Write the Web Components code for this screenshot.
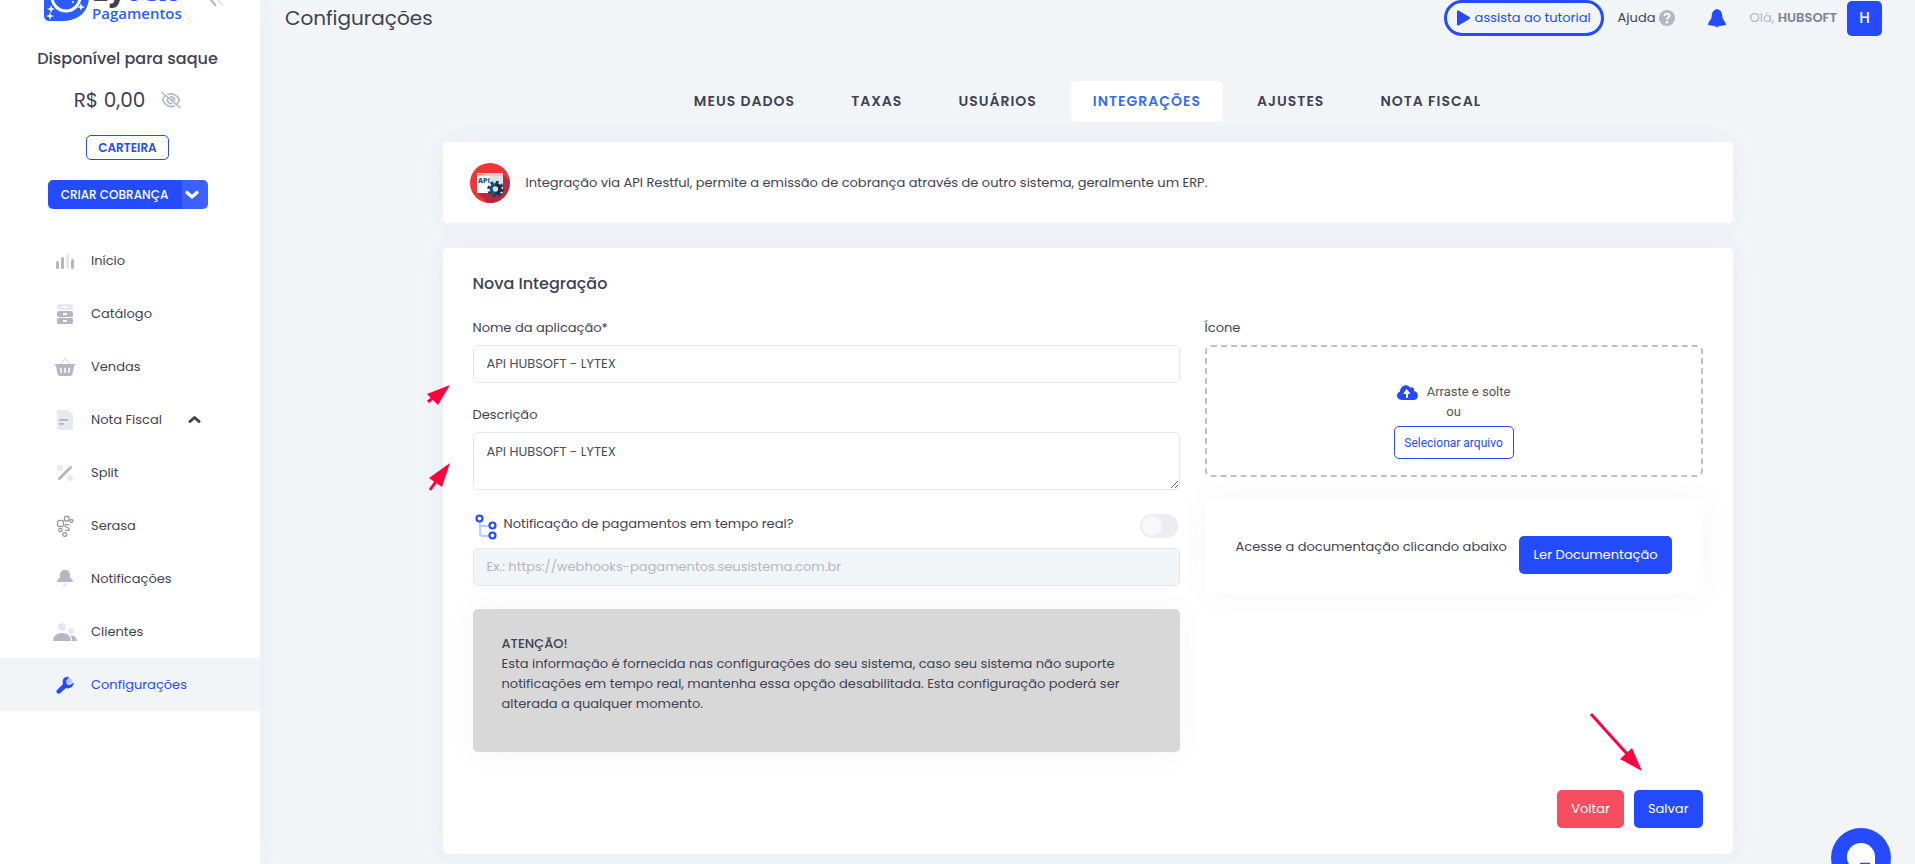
<!DOCTYPE html>
<html lang="pt-BR">
<head>
<meta charset="utf-8">
<meta name="viewport" content="width=device-width, initial-scale=1">
<title>Configurações</title>
<style>
  :root {
    --blue: #244bff;
    --ink: #3f4254;
    --muted: #b5b5c3;
    --soft: #e8e8ef;
    --page: #f1f5f8;
    --line: #e4e6ef;
    --shadow: 0 0 30px rgba(82, 63, 105, .05);
  }
  html, body { margin: 0; min-height: 100%; }
  body {
    background: var(--page);
    color: var(--ink);
    font: 400 13px/20px Poppins, Inter, sans-serif;
  }
</style>
</head>
<body>
<app-shell></app-shell>

<script>
const define = (name, html, setup) => {
  const template = document.createElement('template');
  template.innerHTML = `<style>
    *, *::before, *::after { box-sizing: border-box; }
    :host { display: block; box-sizing: border-box; }
    button, input, textarea { font: inherit; color: inherit; margin: 0; }
    button { cursor: pointer; }
    a { color: inherit; text-decoration: none; }
    svg { display: block; flex: none; }
  </style>` + html;
  customElements.define(name, class extends HTMLElement {
    constructor() {
      super();
      this.attachShadow({ mode: 'open' }).append(template.content.cloneNode(true));
    }
    connectedCallback() { if (setup) setup(this, this.shadowRoot); }
  });
};

define('ui-card', `
  <style>
    :host { background: #fff; border-radius: 5px; box-shadow: var(--shadow); }
  </style>
  <slot></slot>
`);

define('ui-button', `
  <style>
    :host { display: inline-block; }
    button {
      display: block; height: 38px; padding: 0 14px; border: 0; border-radius: 5px;
      background: var(--blue); color: #fff; white-space: nowrap;
    }
    :host([tone="danger"]) button { background: #f64e60; }
  </style>
  <button type="button"><slot></slot></button>
`);

define('nav-item', `
  <style>
    a { display: flex; align-items: center; height: 53px; padding-left: 50px; gap: 11px; }
    .icon { display: grid; place-items: center; width: 30px; }
    :host([active]) a { background: var(--page); color: var(--blue); }
    .end { margin-left: 15px; }
  </style>
  <a href="#"><span class="icon"><slot name="icon"></slot></span><slot></slot><span class="end"><slot name="end"></slot></span></a>
`);

define('app-sidebar', `
  <style>
    :host {
      width: 260px; background: #fff; flex: none; position: relative;
      box-shadow: 0 0 28px rgba(82, 63, 105, .05);
    }
    header { display: flex; flex-direction: column; align-items: center; padding-right: 5px; }
    .brand { height: 22px; margin-right: -5px; width: 260px; }
    .label { margin: 25px 0 0; font-size: 16px; line-height: 24px; font-weight: 500; }
    .balance { display: flex; align-items: center; gap: 16px; height: 30px; margin-top: 14px; font-size: 20px; }
    .balance button { padding: 0; border: 0; background: none; }
    .wallet {
      margin-top: 20px; width: 83px; height: 25px; padding: 0; border: 1px solid var(--blue);
      border-radius: 5px; background: #fff; color: var(--blue); font-size: 12px; font-weight: 600;
    }
    .split { display: flex; margin-top: 20px; border-radius: 5px; overflow: hidden; }
    .split button { height: 29px; border: 0; padding: 0; color: #fff; background: var(--blue); font-weight: 500; font-size: 12px; }
    .split .main { width: 134px; }
    .split .more { width: 26px; background: #3a60ff; padding-left: 3px; }
    nav { margin-top: 25px; }
  </style>
  <header>
    <svg class="brand" viewBox="0 0 260 22" role="img" aria-label="LyTex Pagamentos">
      <path d="M44-24h45V-4C89 12 78 21 62 21H50q-6 0-6-6z" fill="#2a5cff"/>
      <circle cx="66" cy="-3" r="14" fill="none" stroke="#fff" stroke-width="3"/>
      <path d="M50 12l1 3 3 1-3 1-1 3-1-3-3-1 3-1zM51 5l1 3 3 1-3 1-1 3-1-3-3-1 3-1zM81 3l1 3 3 1-3 1-1 3-1-3-3-1 3-1z" fill="#fff"/>
      <circle cx="73" cy="2" r="1" fill="#fff"/>
      <text x="92" y="1" font-family="Open Sans, sans-serif" font-size="28" font-weight="800" fill="#3f4254">Ly<tspan fill="#2a5cff">Tex</tspan></text>
      <text x="92" y="19" font-family="Open Sans, sans-serif" font-size="15" font-weight="600" fill="#2a5cff">Pagamentos</text>
      <path d="M207-5l9 11" stroke="#b5b5c3" stroke-width="2"/><path d="M214-5l9 11" stroke="#e4e4ea" stroke-width="2"/>
    </svg>
    <p class="label">Disponível para saque</p>
    <div class="balance"><span>R$ 0,00</span>
      <button type="button" aria-label="Ocultar saldo">
        <svg width="20" height="18" viewBox="0 0 20 18" fill="none" stroke="#b5b5c3" stroke-width="1.6" stroke-linecap="round">
          <path d="M4 5C2 7 1.5 9 2 9.800C4 14 8 16 11 15.600Q12.500 15.600 13.500 15M7 3.500C12 1.500 17 5 18.500 9Q18 11 16 13M6.500 8C6 11 8.500 13 11 12.500M9 6.200C12 5 14 7.500 13.500 9.800M9.500 8.500Q11.500 7.500 11.500 10"/>
          <path d="M1 1.500l18 15"/>
        </svg>
      </button>
    </div>
    <button class="wallet" type="button">CARTEIRA</button>
    <div class="split">
      <button class="main" type="button">CRIAR COBRANÇA</button>
      <button class="more" type="button" aria-label="Mais opções">
        <svg width="14" height="10" viewBox="0 0 14 10" fill="none" stroke="#fff" stroke-width="3.200" stroke-linecap="round" stroke-linejoin="round"><path d="M2 2.500l5 4.500 5-4.500"/></svg>
      </button>
    </div>
  </header>
  <nav>
    <nav-item><svg slot="icon" width="18" height="16" viewBox="0 0 18 16"><g fill="#b5b5c3"><rect y="8" width="3" height="8" rx="1.500"/><rect x="5" y="4" width="3" height="12" rx="1.500"/><rect x="15" y="6" width="3" height="10" rx="1.500"/></g><rect x="10" width="3" height="16" rx="1.500" fill="#e8e8ef"/></svg>Início</nav-item>
    <nav-item><svg slot="icon" width="16" height="20" viewBox="0 0 16 20"><rect width="16" height="6" rx="1.500" fill="#e8e8ef"/><rect y="7" width="16" height="6" rx="1.500" fill="#b5b5c3"/><rect y="14" width="16" height="6" rx="1.500" fill="#b5b5c3"/><g fill="#fff"><rect x="6" y="2" width="4" height="2"/><rect x="6" y="9" width="4" height="2"/><rect x="6" y="16" width="4" height="2"/></g></svg>Catálogo</nav-item>
    <nav-item><svg slot="icon" width="20" height="19" viewBox="0 0 20 19"><path d="M4.500 8L10 1.500 15.500 8" fill="none" stroke="#e8e8ef" stroke-width="2"/><path d="M1 7h18q1 0 1 1t-1 1.200L17.500 17q-.500 2-2.500 2H5q-2 0-2.500-2L1 9.200Q0 9 0 8t1-1z" fill="#b5b5c3"/><path d="M5.500 11l1 5M10 11v5M14.500 11l-1 5" stroke="#fff" stroke-width="1.500"/></svg>Vendas</nav-item>
    <nav-item><svg slot="icon" width="16" height="20" viewBox="0 0 16 20"><path d="M1.500 0H11l5 5v13.500q0 1.500-1.500 1.500h-13Q0 20 0 18.500v-17Q0 0 1.500 0z" fill="#e8e8ef"/><path d="M3 10h7M3 14h3" stroke="#b5b5c3" stroke-width="2" stroke-linecap="round"/></svg>Nota Fiscal<svg slot="end" width="13" height="9" viewBox="0 0 13 9" fill="none" stroke="#3f4254" stroke-width="3" stroke-linecap="round" stroke-linejoin="round"><path d="M2 6.500L6.500 2.500 11 6.500"/></svg></nav-item>
    <nav-item><svg slot="icon" width="16" height="16" viewBox="0 0 16 16"><path d="M2.500 13.500L13.500 2.500" stroke="#b5b5c3" stroke-width="3" stroke-linecap="round"/><circle cx="3" cy="3" r="3" fill="#e8e8ef"/><circle cx="13" cy="13" r="3" fill="#e8e8ef"/></svg>Split</nav-item>
    <nav-item><svg slot="icon" width="18" height="22" viewBox="0 0 18 22" fill="none" stroke="#999" stroke-width="1.300"><rect x="1.500" y="5.500" width="6" height="6" rx="1.500"/><rect x="8.500" y="1.500" width="4.500" height="4.500" rx="1"/><circle cx="15.500" cy="6" r="1.500"/><circle cx="4.500" cy="15" r="1.700"/><circle cx="8.700" cy="19.500" r="1.900"/><path d="M13.500 10Q9 8.300 9 10.800C9 13 13.500 12 13.300 14.500Q12.500 16.500 9 15"/></svg>Serasa</nav-item>
    <nav-item><svg slot="icon" width="16" height="17" viewBox="0 0 16 17"><path d="M8 0C11 0 13 2 13 5c0 3 .500 3.500 2 4.500 1.500 1 1 2.500 0 2.500H1c-1 0-1.500-1.500 0-2.500C2.500 8.500 3 8 3 5c0-3 2-5 5-5z" fill="#b5b5c3"/><circle cx="8" cy="15" r="2" fill="#e8e8ef"/></svg>Notificações</nav-item>
    <nav-item><svg slot="icon" width="24" height="18" viewBox="0 0 24 18"><circle cx="9" cy="4" r="4" fill="#e8e8ef"/><circle cx="18" cy="8" r="3" fill="#e8e8ef"/><path d="M0 18c0-5 4-8 9-8s9 3 9 8zM19 18c.300-2-.500-4-1.500-5.500C21 12 24 15 24 18z" fill="#b5b5c3"/></svg>Clientes</nav-item>
    <nav-item active><svg slot="icon" width="18" height="18" viewBox="0 0 18 18"><circle cx="13" cy="5" r="3" fill="#b9c5ff"/><path d="M1 14l6-6C5.500 4 8.500 0 13 1L10 5l1 3.500L14 9l3.500-2.500C18 11 13 13.500 10 12l-6 5.300C2 19-1 16 1 14z" fill="#244bff"/></svg>Configurações</nav-item>
  </nav>
`);

define('app-topbar', `
  <style>
    :host { display: flex; align-items: center; justify-content: space-between; height: 36px; padding: 0 33px 0 25px; }
    h1 { margin: 0; font-size: 20px; line-height: 30px; font-weight: 400; }
    .tools { display: flex; align-items: center; }
    .tutorial {
      display: flex; align-items: center; gap: 5px; height: 36px; width: 160px; padding: 0 0 0 10px;
      border: 3px solid var(--blue); border-radius: 18px; background: none; color: var(--blue); white-space: nowrap;
    }
    .help { display: flex; align-items: center; gap: 4px; margin-left: 14px; }
    .bell { border: 0; background: none; padding: 0; margin-left: 33px; }
    .hello { margin-left: 23px; color: var(--muted); }
    .hello b { font-weight: 600; color: #7e8299; }
    .avatar { width: 35px; height: 35px; margin-left: 10px; border: 0; border-radius: 5px; background: var(--blue); color: #fff; font-size: 15px; font-weight: 500; padding: 0; }
  </style>
  <h1>Configurações</h1>
  <div class="tools">
    <button class="tutorial" type="button"><svg width="13" height="16" viewBox="0 0 13 16"><path d="M0 1.500Q0 0 1.500.600l11 6.400q1 1 0 2L1.500 15.400Q0 16 0 14.500z" fill="#244bff"/></svg>assista ao tutorial</button>
    <a class="help" href="#">Ajuda <svg width="16" height="16" viewBox="0 0 16 16"><circle cx="8" cy="8" r="8" fill="#b5b5c3"/><path d="M5.500 6C5.800 3 10.500 3 10.500 5.800 10.500 7.500 8 7.600 8 9.600" fill="none" stroke="#fff" stroke-width="2"/><circle cx="8" cy="12.200" r="1.300" fill="#fff"/></svg></a>
    <button class="bell" type="button" aria-label="Notificações"><svg width="18" height="20" viewBox="0 0 18 20"><path d="M8 1.500Q9 0 10 1.500C14 2.500 14 6 14.500 9.500 15 12 17.500 13 18 17q-9 2-18 0c.500-4 3-5 3.500-7.500C4 6 4 2.500 8 1.500zM6 18.200h6Q9 20.500 6 18.200z" fill="#244bff"/></svg></button>
    <span class="hello">Olá, <b>HUBSOFT</b></span>
    <button class="avatar" type="button">H</button>
  </div>
`);

define('tab-bar', `
  <style>
    nav { display: flex; justify-content: center; gap: 12px; }
    a { height: 41px; padding: 0 22px; border-radius: 5px; font-size: 14px; line-height: 41px; font-weight: 600; letter-spacing: 1px; white-space: nowrap; }
    a[aria-current] { background: #fff; color: #366cf3; }
  </style>
  <nav aria-label="Seções">
    <a href="#">MEUS DADOS</a><a href="#">TAXAS</a><a href="#">USUÁRIOS</a><a href="#" aria-current="page">INTEGRAÇÕES</a><a href="#">AJUSTES</a><a href="#">NOTA FISCAL</a>
  </nav>
`);

define('integration-intro', `
  <style>
    :host { display: flex; align-items: center; gap: 16px; padding: 20px 27px; min-height: 81px; }
  </style>
  <svg width="40" height="40" viewBox="0 0 40 40" aria-hidden="true">
    <circle cx="20" cy="20" r="20" fill="#f23338"/>
    <path d="M33 12l6.500 5A20 20 0 0 1 18 39.900L7 29.500z" fill="#b52a40"/>
    <path d="M7 10h26v20H7z" fill="#fff"/><path d="M20 10h13v20H20z" fill="#e1e1e3"/><path d="M7 10h26v3H7z" fill="#cfcfd4"/>
    <path d="M8 11.500h5" stroke="#f08a45" stroke-width="1"/>
    <text x="8" y="20" font-family="Open Sans, sans-serif" font-size="7" font-weight="800" fill="#16638d">API</text>
    <g transform="translate(25.500 26)"><circle r="6" fill="#18557a"/><path d="M0-6A6 6 0 0 1 0 6z" fill="#0c2c42"/><circle r="7" fill="none" stroke="#143f5c" stroke-width="2.600" stroke-dasharray="3 2.500"/><circle r="2.700" fill="#dcdce0"/></g>
  </svg>
  <span>Integração via API Restful, permite a emissão de cobrança através de outro sistema, geralmente um ERP.</span>
`);

define('file-drop', `
  <style>
    :host {
      display: flex; flex-direction: column; align-items: center; height: 132px; padding-top: 35px;
      border: 2px dashed #c0c0c0; border-radius: 6px; color: #555; font-family: Roboto, sans-serif;
    }
    .hint { display: flex; align-items: center; gap: 9px; }
    button {
      margin-top: 4px; height: 33px; width: 120px; padding: 0; border: 1px solid var(--blue); border-radius: 5px;
      background: #fff; color: var(--blue); font-size: 12px; white-space: nowrap;
    }
  </style>
  <span class="hint"><svg width="21" height="15" viewBox="0 0 21 15"><path d="M5 15C-1 15-1.500 8 3 6.500 3 1 10-2 13 2.500c2-1 5 .500 4 3.500 5 .500 5.500 9-.500 9z" fill="#244bff"/><path d="M9.500 12.500v-4H6.800L9.700 4.500l3 4H10.500v4z" fill="#fff" stroke="#fff"/></svg>Arraste e solte</span>
  <span>ou</span>
  <button type="button">Selecionar arquivo</button>
`);

define('doc-callout', `
  <style>
    :host { display: flex; justify-content: space-between; align-items: flex-start; height: 94px; padding: 36px 31px 20px; background: #fff; box-shadow: var(--shadow); }
    span { line-height: 22px; white-space: nowrap; }
  </style>
  <span>Acesse a documentação clicando abaixo</span>
  <ui-button>Ler Documentação</ui-button>
`);

define('warning-note', `
  <style>
    :host { min-height: 143px; padding: 25px 29px; border-radius: 5px; background: #d8d8d8; box-shadow: var(--shadow); }
    strong { display: block; font-weight: 500; }
    p { margin: 0; }
  </style>
  <strong>ATENÇÃO!</strong>
  <p><slot></slot></p>
`);

define('pointer-arrow', `
  <style>
    :host { position: absolute; pointer-events: none; }
    svg { width: 100%; height: 100%; overflow: visible; }
  </style>
  <svg aria-hidden="true"><line stroke="#ff0040" stroke-width="3"/><polygon fill="#ff0040"/></svg>
`, (host, root) => {
  const [x1, y1, x2, y2] = host.getAttribute('line').split(' ');
  const line = root.querySelector('line');
  Object.entries({ x1, y1, x2, y2 }).forEach(([k, v]) => line.setAttribute(k, v));
  root.querySelector('polygon').setAttribute('points', host.getAttribute('head'));
});

define('integration-form', `
  <style>
    :host { position: relative; padding: 24px 30px 26px; min-height: 606px; }
    h2 { margin: 0; font-size: 16px; line-height: 24px; font-weight: 500; }
    .grid { display: grid; grid-template-columns: repeat(12, minmax(0, 1fr)); column-gap: 25px; margin-top: 22px; }
    .left { grid-column: span 7; }
    .right { grid-column: span 5; }
    label, .caption { display: block; line-height: 20px; }
    input[type="text"], input[type="url"], textarea {
      display: block; width: 100%; height: 38px; padding: 0 13px; border: 1px solid var(--line);
      border-radius: 5px; background: #fff; color: #464e5f; outline: 0;
    }
    .left > label + input, .left > label + textarea, .caption + file-drop { margin-top: 7px; }
    textarea { height: 58px; padding: 9px 13px; resize: vertical; }
    input + label { margin-top: 22px; }
    input[type="url"]:disabled { background: var(--page); margin-top: 8px; }
    ::placeholder { color: var(--muted); opacity: 1; }
    .notify { display: flex; align-items: flex-start; gap: 7px; margin-top: 24px; padding: 0 2px; }
    .notify label { flex: 1; }
    .switch { appearance: none; position: relative; width: 38px; height: 24px; border-radius: 12px; background: #ebedf3; }
    .switch::before { content: ""; display: block; width: 20px; height: 20px; margin: 2px; border-radius: 50%; background: #f8f8fb; }
    warning-note { margin-top: 23px; }
    doc-callout { margin-top: 23px; }
    .actions { display: flex; justify-content: flex-end; gap: 10px; margin-top: 38px; }
    .to-name { left: -16px; top: 137px; width: 24px; height: 20px; }
    .to-text { left: -14px; top: 215px; width: 21px; height: 28px; }
    .to-save { right: 90px; top: 466px; width: 53px; height: 57px; }
  </style>
  <h2>Nova Integração</h2>
  <div class="grid">
    <div class="left">
      <label for="name">Nome da aplicação*</label>
      <input id="name" type="text" value="API HUBSOFT - LYTEX">
      <label for="description">Descrição</label>
      <textarea id="description">API HUBSOFT - LYTEX</textarea>
      <div class="notify">
        <svg width="22" height="26" viewBox="0 0 22 26" fill="none"><path d="M5 8v11q0 3 3 3h6M5 12h9" stroke="#bccaff" stroke-width="2"/><g stroke="#244bff" stroke-width="2.200"><circle cx="4.500" cy="4.500" r="3"/><circle cx="17.500" cy="11.500" r="3"/><circle cx="17.500" cy="21.500" r="3"/></g></svg>
        <label for="notify">Notificação de pagamentos em tempo real?</label>
        <input id="notify" class="switch" type="checkbox">
      </div>
      <input type="url" aria-label="URL de notificação" placeholder="Ex.: https://webhooks-pagamentos.seusistema.com.br" disabled>
      <warning-note>Esta informação é fornecida nas configurações do seu sistema, caso seu sistema não suporte notificações em tempo real, mantenha essa opção desabilitada. Esta configuração poderá ser alterada a qualquer momento.</warning-note>
    </div>
    <div class="right">
      <span class="caption">Ícone</span>
      <file-drop></file-drop>
      <doc-callout></doc-callout>
    </div>
  </div>
  <div class="actions"><ui-button tone="danger">Voltar</ui-button><ui-button>Salvar</ui-button></div>
  <pointer-arrow class="to-name" line="1 17 8 11" head="23,0 0,9 11,20"></pointer-arrow>
  <pointer-arrow class="to-text" line="1 27 8 17" head="21,0 0,15 13,24"></pointer-arrow>
  <pointer-arrow class="to-save" line="1 0 38 41" head="52,57 42,34 30,45"></pointer-arrow>
`);

define('chat-launcher', `
  <style>
    :host { position: fixed; right: 24px; bottom: -24px; }
    button { display: grid; place-items: center; width: 60px; height: 60px; padding: 0; border: 0; border-radius: 50%; background: var(--blue); }
  </style>
  <button type="button" aria-label="Abrir chat"><svg width="28" height="30" viewBox="0 0 28 30"><path d="M14 0a14 14 0 0 1 14 14v14H14a14 14 0 0 1 0-28z" fill="#fff"/><path d="M13 20.500h10" stroke="#244bff" stroke-width="1.500"/></svg></button>
`);

define('app-shell', `
  <style>
    :host { display: flex; min-height: 100vh; }
    main { flex: 1; min-width: 0; }
    .content { max-width: 1290px; margin: 0 auto; padding: 45px 0 8px; }
    tab-bar { margin-bottom: 20px; }
    ui-card + ui-card { margin-top: 25px; }
  </style>
  <app-sidebar></app-sidebar>
  <main>
    <app-topbar></app-topbar>
    <div class="content">
      <tab-bar></tab-bar>
      <ui-card><integration-intro></integration-intro></ui-card>
      <ui-card><integration-form></integration-form></ui-card>
    </div>
  </main>
  <chat-launcher></chat-launcher>
`);
</script>
</body>
</html>
